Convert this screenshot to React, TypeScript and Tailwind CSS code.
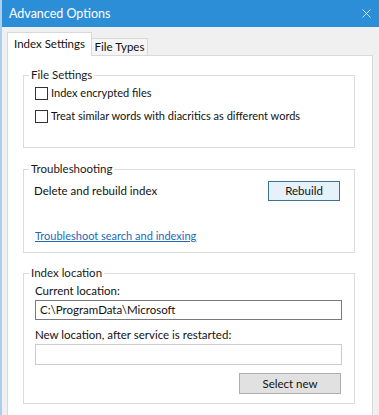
import { X } from 'lucide-react'

function GroupBox({ title, children, className }: { title: string; children: React.ReactNode; className?: string }) {
  return (
    <fieldset className={`w-[332px] border border-[#dcdcdc] ${className ?? ''}`}>
      <legend className="ml-[5px] px-[2px] text-[11.5px] leading-[16px] text-[#1a1a1a]">{title}</legend>
      {children}
    </fieldset>
  )
}

function CheckRow({ label, className }: { label: string; className?: string }) {
  return (
    <label className={`flex h-[16px] items-center gap-[3px] ${className ?? ''}`}>
      <span className="h-[13px] w-[13px] border border-[#333333] bg-white" />
      <span className="text-[11px] leading-[16px] text-[#111]">{label}</span>
    </label>
  )
}

export default function App() {
  return (
    <div
      className="flex h-[415px] w-[379px] flex-col overflow-hidden border-l-2 border-[#a9d0ee] bg-[#f0f0f0]"
      style={{ fontFamily: 'Lato, "Noto Sans", sans-serif' }}
    >
      <div className="flex h-[27px] shrink-0 items-center justify-between bg-[#2d8ed8] pl-[7px] pr-[5px]">
        <span className="text-[12.5px] leading-[18px] text-white">Advanced Options</span>
        <X size={15} strokeWidth={1.2} className="text-white" />
      </div>

      <div className="flex h-[28px] shrink-0 items-end pl-[5px]">
        <div className="relative z-10 -mb-px flex h-[24px] w-[85px] items-center justify-center border border-b-0 border-[#d9d9d9] bg-white pb-[2px] text-[11.5px] text-[#111]">
          Index Settings
        </div>
        <div className="flex h-[17px] w-[56px] items-center justify-center border border-b-0 border-l-0 border-[#d9d9d9] bg-[#f5f5f5] text-[11.5px] text-[#111]">
          File Types
        </div>
      </div>

      <div className="mr-[6px] ml-[5px] flex-1 border border-b-0 border-[#d9d9d9] bg-white pt-[11px] pl-[15px]">
        <GroupBox title="File Settings" className="pb-[23px]">
          <div className="pl-[11px]">
            <CheckRow label="Index encrypted files" className="mt-[2px]" />
            <CheckRow label="Treat similar words with diacritics as different words" className="mt-[7px]" />
          </div>
        </GroupBox>

        <GroupBox title="Troubleshooting" className="mt-[13px] pb-[8px]">
          <div className="pl-[10px] pr-[14px]">
            <div className="mt-[4px] flex items-center justify-between">
              <span className="text-[11.5px] leading-[16px] text-[#111]">Delete and rebuild index</span>
              <button className="h-[20px] w-[72px] border border-[#3f7390] bg-[#e5f1fb] text-[11.5px] text-[#111]">
                Rebuild
              </button>
            </div>
            <a href="#" className="mt-[27px] block pl-px text-[11px] leading-[16px] text-[#1b6ab5] underline">
              Troubleshoot search and indexing
            </a>
          </div>
        </GroupBox>

        <GroupBox title="Index location" className="mt-[12px] pb-[9px]">
          <div className="pl-[11px] pr-[12px]">
            <div className="mt-[2px] text-[11.5px] leading-[16px] text-[#111]">Current location:</div>
            <div className="mt-[1px] flex h-[20px] items-center border border-[#7a7a7a] pl-[4px] text-[11.5px] text-[#111]">
              C:\ProgramData\Microsoft
            </div>
            <div className="mt-[7px] text-[11.5px] leading-[16px] text-[#111]">New location, after service is restarted:</div>
            <div className="mt-[1px] h-[21px] border border-[#cccccc]" />
            <div className="mt-[8px] flex justify-end">
              <button className="mr-px h-[21px] w-[102px] border border-[#adadad] bg-[#e1e1e1] text-[11.5px] text-[#111]">
                Select new
              </button>
            </div>
          </div>
        </GroupBox>
      </div>
    </div>
  )
}
